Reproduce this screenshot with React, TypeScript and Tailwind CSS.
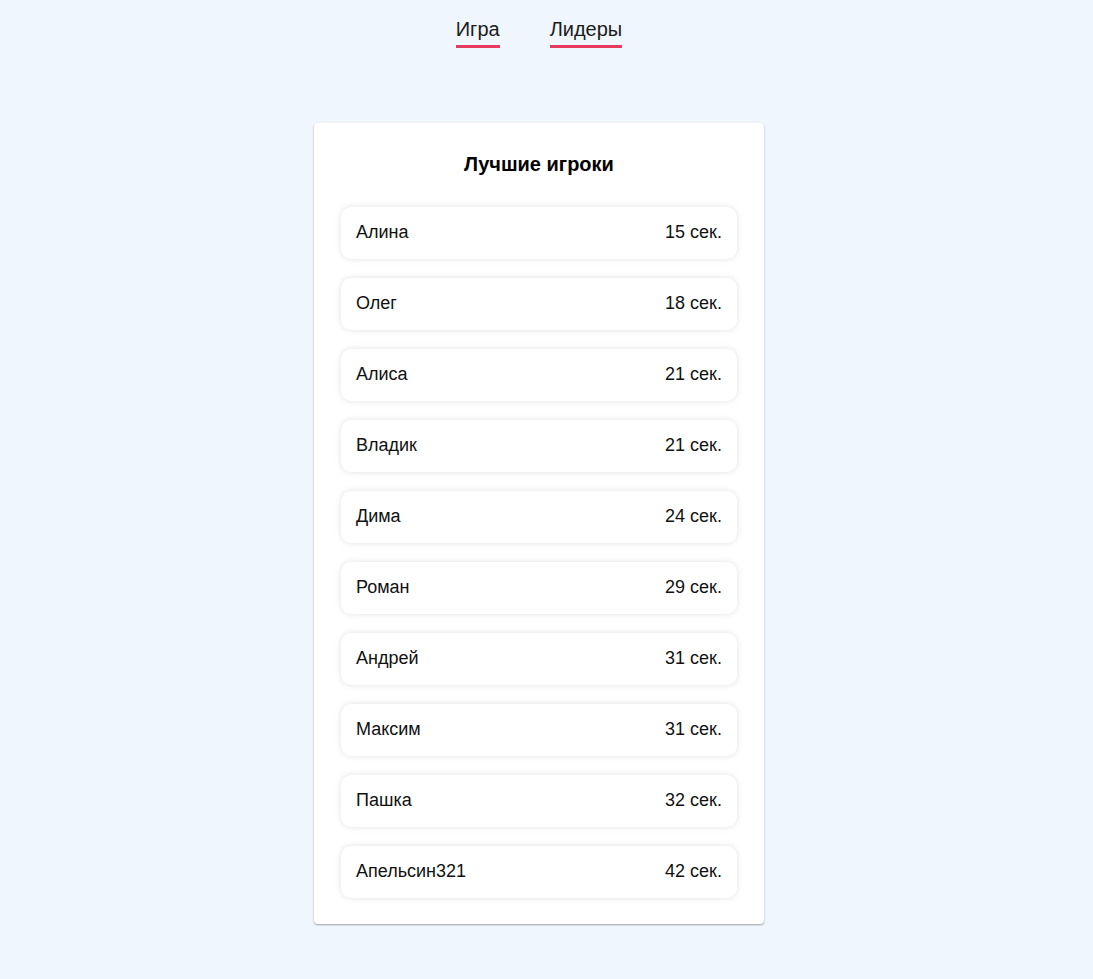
import React from "react";

const leaders = [
  { name: "Алина", time: 15 },
  { name: "Олег", time: 18 },
  { name: "Алиса", time: 21 },
  { name: "Владик", time: 21 },
  { name: "Дима", time: 24 },
  { name: "Роман", time: 29 },
  { name: "Андрей", time: 31 },
  { name: "Максим", time: 31 },
  { name: "Пашка", time: 32 },
  { name: "Апельсин321", time: 42 },
];

const App: React.FC = () => {
  return (
    <div className="min-h-screen bg-[#eff6fe] pr-[15px] font-['Liberation_Sans',Arial,sans-serif] text-[#111]">
      {/* Навигация */}
      <nav className="flex justify-center gap-[50px] pt-[15px]">
        <a className="text-[20px] leading-[28px] pb-[2px] border-b-[3px] border-[#e63b5f] text-[#1c1c1c]">
          Игра
        </a>
        <a className="text-[20px] leading-[28px] pb-[2px] border-b-[3px] border-[#e63b5f] text-[#1c1c1c]">
          Лидеры
        </a>
      </nav>

      {/* Таблица лидеров */}
      <div className="mx-auto mt-[75px] w-[450px] bg-white rounded-[4px] shadow-[0_1px_2px_rgba(0,0,0,0.35)] px-[27px] pt-[27px] pb-[26px]">
        <h2 className="text-center text-[20px] leading-[28px] font-bold text-black">
          Лучшие игроки
        </h2>
        <div className="mt-[29px] flex flex-col gap-[19px]">
          {leaders.map((p) => (
            <div
              key={p.name}
              className="h-[52px] flex items-center justify-between pl-[15px] pr-[15px] pb-[2px] rounded-[10px] bg-white shadow-[0_0_6px_rgba(0,0,0,0.12)] text-[18px]"
            >
              <span>{p.name}</span>
              <span>{p.time} сек.</span>
            </div>
          ))}
        </div>
      </div>
    </div>
  );
};

export default App;
